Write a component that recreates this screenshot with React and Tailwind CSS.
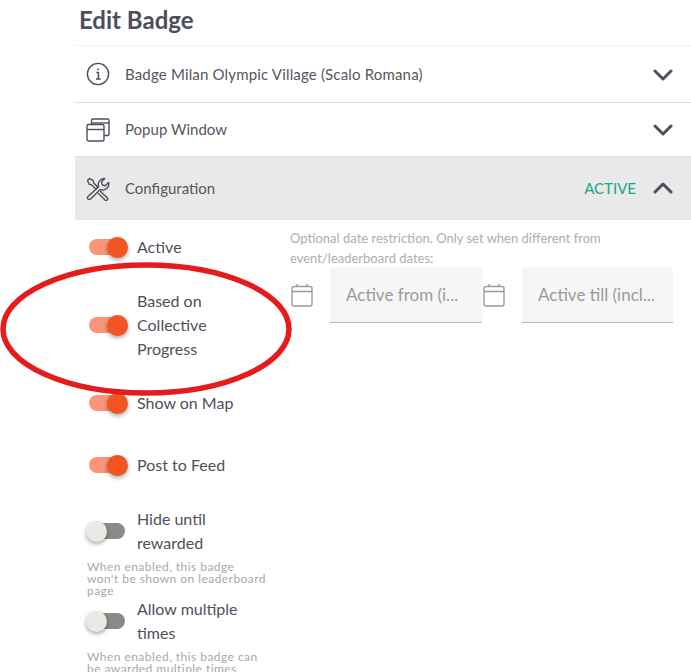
import React from "react";

const font = { fontFamily: '"Lato", "Noto Sans", sans-serif' };

function Info() {
  return (
    <svg width="24" height="24" viewBox="0 0 24 24" fill="none" stroke="#4d4f5c" strokeWidth="1.4">
      <circle cx="12" cy="12" r="10.6" />
      <path d="M10.4 10.6h2v6.4M10 17h4.6" strokeWidth="1.5" />
      <circle cx="12" cy="7.4" r="0.9" fill="#4d4f5c" stroke="none" />
    </svg>
  );
}
function Windows() {
  return (
    <svg width="24" height="24" viewBox="0 0 24 24" fill="none" stroke="#4d4f5c" strokeWidth="1.4" strokeLinejoin="round">
      <rect x="1" y="6.5" width="17" height="16.5" rx="1.5" />
      <path d="M1 11.5h17" />
      <path d="M5.5 6.5V2.5a1.5 1.5 0 0 1 1.5-1.5h14.5a1.5 1.5 0 0 1 1.5 1.5v13.5a1.5 1.5 0 0 1-1.5 1.5H18" />
      <path d="M5.5 5h17.5" />
    </svg>
  );
}
function Tools() {
  return (
    <svg width="24" height="24" viewBox="0 0 24 24" fill="none" stroke="#4d4f5c" strokeWidth="1.4" strokeLinejoin="round" strokeLinecap="round">
      <path d="M1.5 3.5 3.5 1.5l3.6 1.8.6 2.6 4 4-2 2-4-4-2.6-.6z" />
      <path d="M22.6 5.4l-3.4 3.3-3-.8-.8-3 3.3-3.4a6 6 0 0 0-6 8.2L2 19.4a2 2 0 0 0 0 2.6 2 2 0 0 0 2.6 0l9.7-9.6a6 6 0 0 0 8.3-7z" />
      <path d="M14.6 14.4l6.6 6.4a1.6 1.6 0 0 1 0 2.2 1.6 1.6 0 0 1-2.2 0l-6.5-6.5" />
    </svg>
  );
}
function Chevron({ up }) {
  return (
    <svg width="20" height="13" viewBox="0 0 20 13" fill="none" stroke="#4d4f5c" strokeWidth="3" strokeLinecap="round" strokeLinejoin="round" className={up ? "rotate-180" : ""}>
      <path d="M2 3l8 8 8-8" />
    </svg>
  );
}
function Calendar() {
  return (
    <svg width="22" height="24" viewBox="0 0 22 24" fill="none" stroke="#9a9a9a" strokeWidth="1.4" className="shrink-0">
      <rect x="1" y="3.5" width="20" height="19.5" rx="2" />
      <path d="M1 8.5h20M6 1v3M16 1v3" />
    </svg>
  );
}

function Row({ icon, label, right, className, labelClass }) {
  return (
    <div className={"flex items-center pl-[11px] pr-[18px] border-b border-[#dedede] " + className}>
      <div className="w-[39px] flex items-center">{icon}</div>
      <span className={"text-[15px] text-[#55565f] grow " + (labelClass || "")}>{label}</span>
      {right}
    </div>
  );
}

function Toggle({ on }) {
  return (
    <div className="relative w-[36px] h-[16px] shrink-0">
      <div className={"w-full h-full rounded-full " + (on ? "bg-[#f8957a]" : "bg-[#8a8a8a]")} />
      <div
        className={
          "absolute top-[-2.5px] w-[21px] h-[21px] rounded-full shadow-[0_2px_4px_rgba(0,0,0,0.35)] " +
          (on ? "left-[18px] bg-[#f25522]" : "left-[-3px] bg-[#e8ebe4]")
        }
      />
    </div>
  );
}

function Switch({ on, lines, className, note }) {
  return (
    <div className={className}>
      <div className="flex items-center pl-[14px]">
        <Toggle on={on} />
        <div className="ml-[12px] text-[16px] leading-[24px] text-[#4e505c]">
          {lines.map((l) => (
            <div key={l}>{l}</div>
          ))}
        </div>
      </div>
      {note && (
        <div className="mt-[6px] pl-[12px] text-[12px] leading-[12px] text-[#a8a8a8] tracking-[0.45px] whitespace-nowrap">
          {note.map((l) => (
            <div key={l}>{l}</div>
          ))}
        </div>
      )}
    </div>
  );
}

function DateInput({ label, width }) {
  return (
    <div className={"h-[56px] bg-[#f6f6f6] rounded-t border-b border-[#b5b5b5] flex items-center pl-4 text-[17px] text-[#9b9b9b] " + width}>
      {label}
    </div>
  );
}

export default function App() {
  return (
    <div style={font} className="relative w-[691px] h-[672px] overflow-hidden bg-white pl-[75px]">
      <div className="h-[46px] pl-1 pt-[6px] text-[24px] leading-[28px] font-bold text-[#4d4f5c] border-b border-[#f2f2f2]">Edit Badge</div>
      <Row className="h-[57px]" labelClass="tracking-[0.17px]" icon={<Info />} label="Badge Milan Olympic Village (Scalo Romana)" right={<Chevron />} />
      <Row className="h-[54px] border-[#c9c9c9]" icon={<Windows />} label="Popup Window" right={<Chevron />} />
      <Row
        className="h-[63px] bg-[#e9e9e9] border-b-0"
        icon={<Tools />}
        label="Configuration"
        right={
          <div className="flex items-center gap-[17px]">
            <span className="text-[15px] text-[#17a589]">ACTIVE</span>
            <Chevron up />
          </div>
        }
      />
      <div className="flex">
        <div className="w-[215px] shrink-0 pt-[15px]">
          <Switch on lines={["Active"]} />
          <Switch on lines={["Based on", "Collective", "Progress"]} className="mt-[30px]" />
          <Switch on lines={["Show on Map"]} className="mt-[30px]" />
          <Switch on lines={["Post to Feed"]} className="mt-[38px]" />
          <Switch on={false} lines={["Hide until", "rewarded"]} className="mt-[30px]" note={["When enabled, this badge", "won't be shown on leaderboard", "page"]} />
          <Switch on={false} lines={["Allow multiple", "times"]} note={["When enabled, this badge can", "be awarded multiple times"]} />
        </div>
        <div className="grow pt-[8px]">
          <p className="text-[13px] leading-[20px] text-[#aeaeae] w-[330px] mb-[-1px]">Optional date restriction. Only set when different from event/leaderboard dates:</p>
          <div className="flex items-center pl-[1px]">
            <div className="flex items-center gap-[17px]">
              <Calendar />
              <DateInput label="Active from (i..." width="w-[152px]" />
            </div>
            <div className="flex items-center gap-[17px] ml-[1px]">
              <Calendar />
              <DateInput label="Active till (incl..." width="w-[151px]" />
            </div>
          </div>
        </div>
      </div>
      <svg className="absolute left-0 top-[260px] pointer-events-none" width="296" height="140" viewBox="0 0 296 140" fill="none">
        <ellipse cx="146" cy="69" rx="143" ry="64" stroke="#e61c1c" strokeWidth="5.5" />
      </svg>
    </div>
  );
}
